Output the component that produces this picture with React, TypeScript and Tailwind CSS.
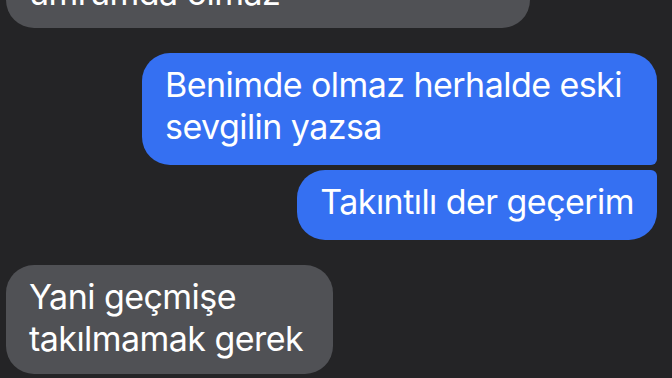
import React from 'react';

type Side = 'in' | 'out';

interface BubbleProps {
  side: Side;
  className?: string;
  children: React.ReactNode;
}

const Bubble: React.FC<BubbleProps> = ({ side, className = '', children }) => {
  const tone = side === 'out' ? 'bg-[#3570f2]' : 'bg-[#505155]';
  return (
    <div
      className={`${tone} text-white text-[34px] leading-[42px] tracking-[-0.55px] px-[23px] pt-[11px] ${className}`}
    >
      {children}
    </div>
  );
};

export default function App() {
  return (
    <div
      className="w-[672px] h-[378px] overflow-hidden bg-[#242426] flex flex-col"
      style={{ fontFamily: 'Inter, "Noto Sans", sans-serif' }}
    >
      <div className="flex justify-start pl-[6px] -mt-[39px]">
        <Bubble side="in" className="w-[524px] rounded-[28px] pb-[14px]">
          umrumda olmaz
        </Bubble>
      </div>

      <div className="flex flex-col items-end pr-[15px] mt-[25px] gap-[5px]">
        <Bubble side="out" className="w-[515px] pb-[17px] rounded-[28px] rounded-br-[6px]">
          Benimde olmaz herhalde eski sevgilin yazsa
        </Bubble>
        <Bubble side="out" className="w-fit pb-[17px] rounded-[28px] rounded-tr-[6px]">
          Takıntılı der geçerim
        </Bubble>
      </div>

      <div className="flex justify-start pl-[6px] mt-[25px]">
        <Bubble side="in" className="w-[327px] rounded-[28px] pb-[14px]">
          Yani geçmişe takılmamak gerek
        </Bubble>
      </div>
    </div>
  );
}
